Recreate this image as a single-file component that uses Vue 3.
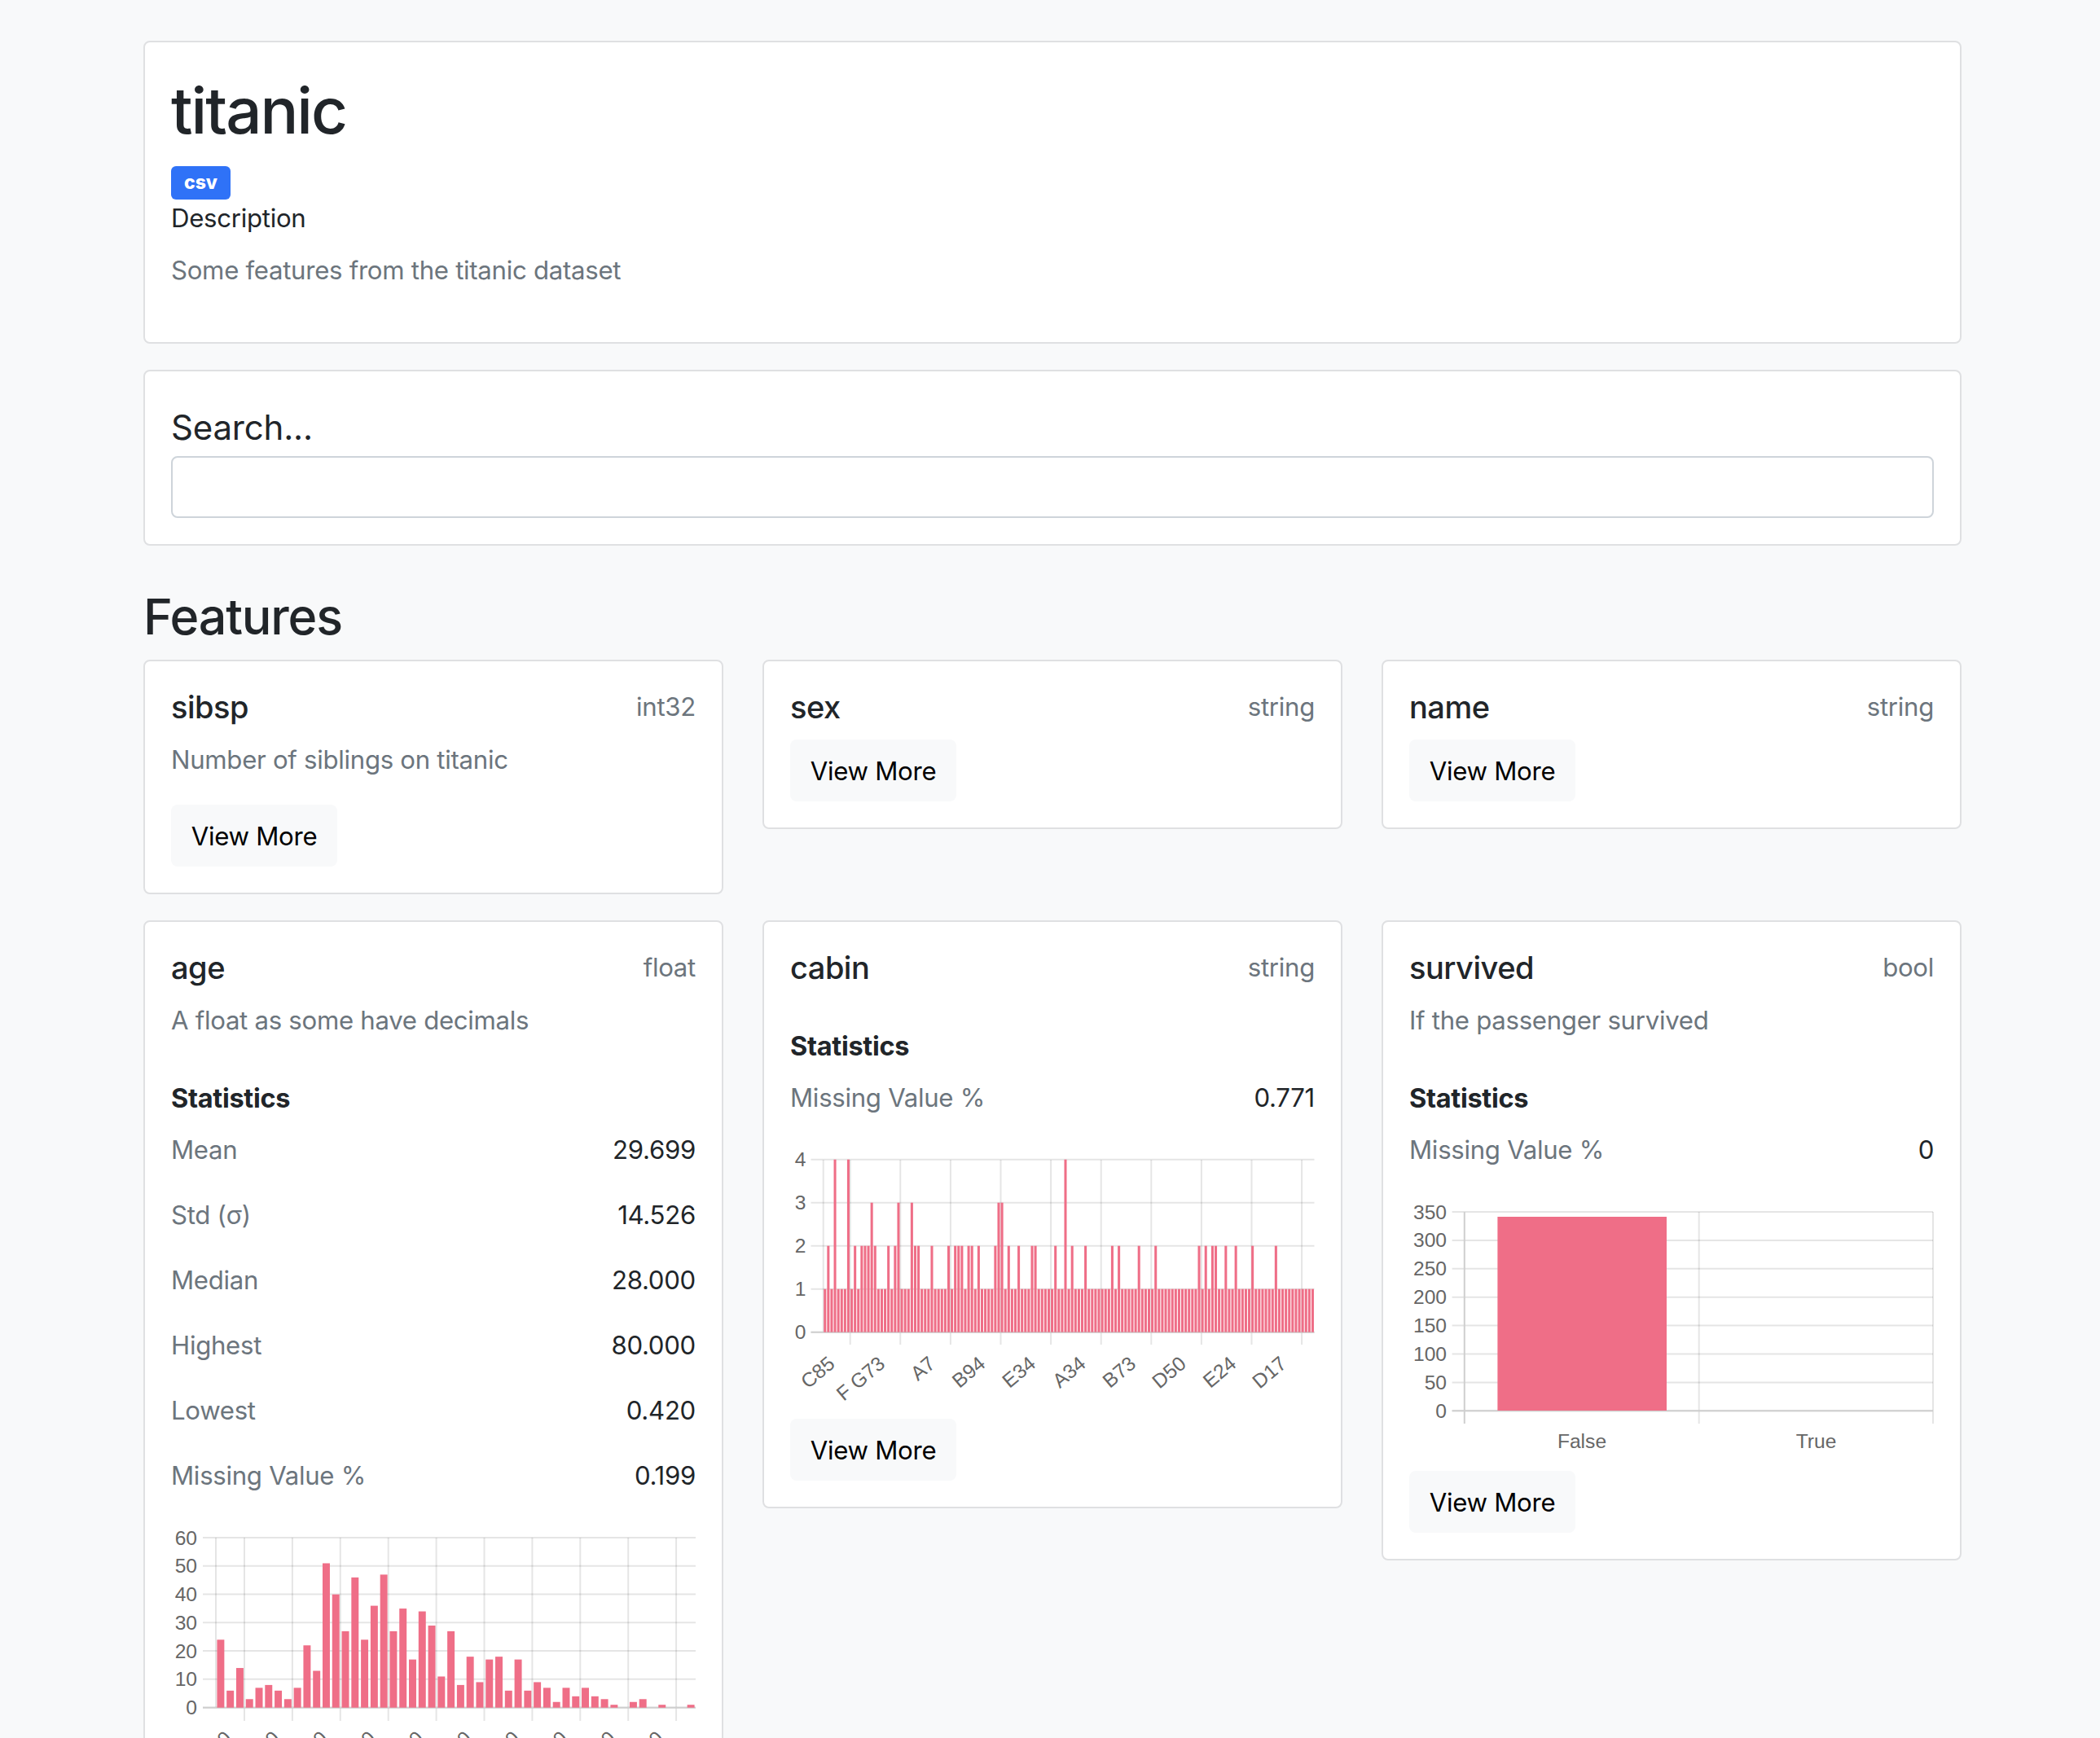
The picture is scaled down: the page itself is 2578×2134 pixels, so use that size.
<script setup>
const ageData = [24,6,14,3,7,8,6,3,7,22,13,51,40,27,46,24,36,47,27,35,17,34,29,11,27,8,18,9,17,18,6,17,6,9,7,2,7,4,7,4,3,1,0,2,3,0,1,0,0,1]
const hi = {1:2,3:4,7:4,9:2,11:2,12:2,13:2,14:3,15:2,19:2,21:2,22:3,26:3,27:2,28:2,32:2,37:2,39:2,40:2,41:2,43:2,44:2,46:2,51:2,52:3,53:3,55:2,58:2,62:2,63:2,69:2,72:4,74:2,78:2,86:2,88:2,94:2,99:2,112:2,114:2,116:2,117:2,120:2,123:2,128:2,135:2}
const cabinData = Array.from({ length: 147 }, (_, i) => hi[i] || 1)
const cabinLabels = ['C85', 'F G73', 'A7', 'B94', 'E34', 'A34', 'B73', 'D50', 'E24', 'D17']

function makeBars(data, left, right, base, unit, frac) {
  const step = (right - left) / data.length
  return data.map((v, i) => ({
    x: left + step * i + (step * (1 - frac)) / 2,
    y: base - v * unit,
    w: step * frac,
    h: v * unit
  })).filter(b => b.h > 0)
}
function range(n, f) {
  return Array.from({ length: n }, (_, i) => f(i))
}

const age = {
  bars: makeBars(ageData, 54, 643, 228.7, 3.475, 0.76),
  ys: range(7, i => ({ y: 20 + i * 34.75, t: 60 - i * 10 })),
  xs: range(10, i => 89 + i * 58.9),
  labels: range(10, i => 75 + i * 58.9)
}
const cabin = {
  bars: makeBars(cabinData, 39.2, 642, 231.7, 53, 0.74),
  ys: range(5, i => ({ y: 19.7 + i * 53, t: 4 - i })),
  xs: range(10, i => 72.2 + i * 61.6),
  labels: cabinLabels.map((t, i) => ({ t, x: 55 + i * 61.6 }))
}
const surv = {
  ys: range(8, i => ({ y: 20 + i * 34.9, t: 350 - i * 50 }))
}
const simple = [
  { name: 'sex', type: 'string' },
  { name: 'name', type: 'string' }
]
const ageStats = [
  ['Mean', '29.699'], ['Std (σ)', '14.526'], ['Median', '28.000'],
  ['Highest', '80.000'], ['Lowest', '0.420'], ['Missing Value %', '0.199']
]
</script>

<template>
  <main class="page">
    <section class="card head">
      <h1>titanic</h1>
      <div class="badge-row"><span class="badge">csv</span></div>
      <div class="desc-label">Description</div>
      <p class="muted">Some features from the titanic dataset</p>
    </section>

    <section class="card search">
      <label for="q">Search...</label>
      <input id="q" type="text" />
    </section>

    <h2>Features</h2>

    <div class="grid">
      <article class="card feat">
        <div class="feat-top"><h5>sibsp</h5><span class="muted">int32</span></div>
        <p class="muted desc">Number of siblings on titanic</p>
        <a class="btn">View More</a>
      </article>
      <article v-for="f in simple" :key="f.name" class="card feat">
        <div class="feat-top"><h5>{{ f.name }}</h5><span class="muted">{{ f.type }}</span></div>
        <a class="btn">View More</a>
      </article>

      <article class="card feat">
        <div class="feat-top"><h5>age</h5><span class="muted">float</span></div>
        <p class="muted desc">A float as some have decimals</p>
        <div class="stats">
          <h6>Statistics</h6>
          <div v-for="s in ageStats" :key="s[0]" class="stat"><span class="muted">{{ s[0] }}</span><span>{{ s[1] }}</span></div>
        </div>
        <svg class="chart" width="644" height="339" viewBox="-1 0 644 339">
          <g class="grid-lines">
            <line v-for="g in age.ys" :key="g.t" x1="38" x2="643" :y1="g.y" :y2="g.y" />
            <line v-for="x in age.xs" :key="x" :x1="x" :x2="x" y1="20" y2="245" />
            <line x1="54" x2="54" y1="20" y2="228.7" />
          </g>
          <line class="axis" x1="38" x2="643" y1="228.7" y2="228.7" />
          <rect v-for="(b, i) in age.bars" :key="i" class="bar" :x="b.x" :y="b.y" :width="b.w" :height="b.h" />
          <text v-for="g in age.ys" :key="g.t" class="tick" x="31" :y="g.y + 8.5" text-anchor="end">{{ g.t }}</text>
          <text v-for="x in age.labels" :key="x" class="tick" text-anchor="end" :transform="`translate(${x} 269) rotate(-40)`">0.0</text>
        </svg>
      </article>

      <article class="card feat">
        <div class="feat-top"><h5>cabin</h5><span class="muted">string</span></div>
        <div class="stats">
          <h6>Statistics</h6>
          <div class="stat"><span class="muted">Missing Value %</span><span>0.771</span></div>
        </div>
        <svg class="chart" width="644" height="338" viewBox="-1.5 0 644 338">
          <g class="grid-lines">
            <line v-for="g in cabin.ys" :key="g.t" x1="24" x2="642" :y1="g.y" :y2="g.y" />
            <line v-for="x in cabin.xs" :key="x" :x1="x" :x2="x" y1="20" y2="247" />
            <line x1="39.2" x2="39.2" y1="20" y2="231.7" />
          </g>
          <line class="axis" x1="24" x2="642" y1="231.7" y2="231.7" />
          <rect v-for="(b, i) in cabin.bars" :key="i" class="bar" :x="b.x" :y="b.y" :width="b.w" :height="b.h" />
          <text v-for="g in cabin.ys" :key="g.t" class="tick" x="18" :y="g.y + 8.5" text-anchor="end">{{ g.t }}</text>
          <text v-for="l in cabin.labels" :key="l.t" class="tick" text-anchor="end" :transform="`translate(${l.x} 273) rotate(-40)`">{{ l.t }}</text>
        </svg>
        <a class="btn">View More</a>
      </article>

      <article class="card feat">
        <div class="feat-top"><h5>survived</h5><span class="muted">bool</span></div>
        <p class="muted desc">If the passenger survived</p>
        <div class="stats">
          <h6>Statistics</h6>
          <div class="stat"><span class="muted">Missing Value %</span><span>0</span></div>
        </div>
        <svg class="chart" width="644" height="338" viewBox="-2 0 644 338">
          <g class="grid-lines">
            <line v-for="g in surv.ys" :key="g.t" x1="50.6" x2="641" :y1="g.y" :y2="g.y" />
            <line x1="353.7" x2="353.7" y1="20" y2="280" />
            <line x1="641" x2="641" y1="20" y2="280" />
          </g>
          <line class="axis" x1="65.8" x2="65.8" y1="20" y2="280" />
          <line class="axis" x1="50.6" x2="641" y1="264.3" y2="264.3" />
          <rect class="bar" x="106.4" y="26" width="207.6" height="238" />
          <text v-for="g in surv.ys" :key="g.t" class="tick" x="44" :y="g.y + 8.5" text-anchor="end">{{ g.t }}</text>
          <text class="tick" x="210" y="310" text-anchor="middle">False</text>
          <text class="tick" x="497.5" y="310" text-anchor="middle">True</text>
        </svg>
        <a class="btn">View More</a>
      </article>
    </div>
  </main>
</template>

<style>
html, body {
  margin: 0;
  height: 2134px;
  overflow: hidden;
  background: #f8f9fa;
}
</style>

<style scoped>
.page {
  box-sizing: border-box;
  width: 2232px;
  margin: 0 0 0 176px;
  padding-top: 50px;
  font-family: Inter, "Noto Sans", sans-serif;
  font-size: 31.2px;
  line-height: 49px;
  letter-spacing: -0.3px;
  color: #000;
}
.card {
  box-sizing: border-box;
  background: #fff;
  border: 2px solid #dfe0e2;
  border-radius: 8px;
  padding: 32px;
}
.muted { color: #6c757d; }
h1 {
  margin: 3px 0 0;
  font-size: 78px;
  line-height: 98px;
  font-weight: 500;
  color: #212529;
  letter-spacing: -2px;
}
.head { height: 372px; }
.badge-row { margin-top: 19px; height: 40px; }
.badge {
  display: block;
  width: 73px;
  height: 41px;
  border-radius: 6px;
  background: #2f72f7;
  color: #fff;
  font-size: 23px;
  line-height: 41px;
  font-weight: 800;
  text-align: center;
  letter-spacing: 0;
}
.desc-label { color: #212529; }
.head p { margin: 15px 0 0; }
.search { margin-top: 32px; height: 216px; }
.search label {
  display: block;
  font-size: 42px;
  line-height: 49px;
  letter-spacing: -0.2px;
  color: #212529;
  margin-top: 12px;
  margin-bottom: 11px;
}
.search input {
  display: block;
  box-sizing: border-box;
  width: 100%;
  height: 76px;
  border: 2px solid #ced4da;
  border-radius: 8px;
  background: #fff;
}
h2 {
  margin: 48px 0 14px;
  font-size: 61px;
  line-height: 78px;
  font-weight: 500;
  color: #212529;
  letter-spacing: -1.2px;
}
.grid {
  display: grid;
  grid-template-columns: repeat(3, 712px);
  justify-content: space-between;
  align-items: start;
  row-gap: 32px;
}
.feat-top {
  display: flex;
  justify-content: space-between;
  align-items: center;
  height: 49px;
  margin-bottom: 15px;
}
h5 {
  margin: 0;
  font-size: 38px;
  font-weight: 500;
  color: #212529;
  letter-spacing: -0.5px;
}
.desc { margin: 0 0 30px; padding-top: 1px; }
.stats { margin-top: 47px; }
.desc + .stats { margin-top: 46px; }
h6 {
  margin: 0 0 15px;
  font-size: 32.5px;
  line-height: 49px;
  font-weight: 700;
  color: #212529;
}
.stat {
  display: flex;
  justify-content: space-between;
  margin-bottom: 31px;
  color: #212529;
}
.chart {
  display: block;
  overflow: visible;
}
.grid-lines line {
  stroke: rgba(0, 0, 0, 0.1);
  stroke-width: 2;
}
.axis {
  stroke: #cfcfcf;
  stroke-width: 2;
}
.bar { fill: #ef6e87; }
.tick {
  font-family: "Liberation Sans", Arial, sans-serif;
  font-size: 24.6px;
  letter-spacing: 0;
  fill: #666;
}
.btn {
  display: inline-block;
  box-sizing: border-box;
  width: 204px;
  height: 76px;
  line-height: 78px;
  text-align: center;
  background: #f8f9fa;
  border-radius: 8px;
  color: #000;
  vertical-align: top;
}
</style>
